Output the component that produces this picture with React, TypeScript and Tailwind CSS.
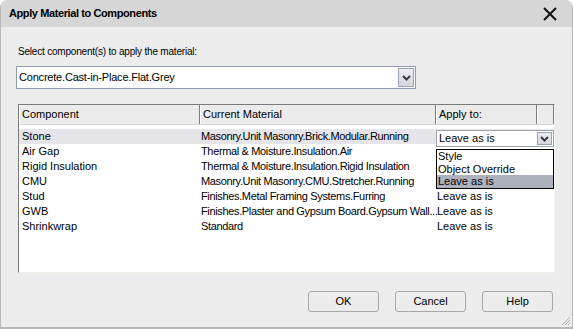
import React from 'react';

interface Row {
  component: string;
  material: string;
  applyTo: string;
}

const rows: Row[] = [
  { component: 'Stone', material: 'Masonry.Unit Masonry.Brick.Modular.Running', applyTo: 'Leave as is' },
  { component: 'Air Gap', material: 'Thermal & Moisture.Insulation.Air', applyTo: 'Leave as is' },
  { component: 'Rigid Insulation', material: 'Thermal & Moisture.Insulation.Rigid Insulation', applyTo: 'Leave as is' },
  { component: 'CMU', material: 'Masonry.Unit Masonry.CMU.Stretcher.Running', applyTo: 'Leave as is' },
  { component: 'Stud', material: 'Finishes.Metal Framing Systems.Furring', applyTo: 'Leave as is' },
  { component: 'GWB', material: 'Finishes.Plaster and Gypsum Board.Gypsum Wall...', applyTo: 'Leave as is' },
  { component: 'Shrinkwrap', material: 'Standard', applyTo: 'Leave as is' },
];

const options = ['Style', 'Object Override', 'Leave as is'];

// rows whose "Apply to" cell sits under the open list
const hiddenByList = [0, 1, 2, 3];

const Chevron = () => (
  <svg width="9" height="6" viewBox="0 0 9 6">
    <path d="M1 1 L4.5 4.5 L8 1" fill="none" stroke="#3a3a3a" strokeWidth="2" />
  </svg>
);

const ArrowButton: React.FC<{ className?: string }> = ({ className }) => (
  <div
    className={`flex items-center justify-center border border-[#9aa2b4] bg-gradient-to-b from-[#eceef4] to-[#d4d6e0] ${className ?? ''}`}
  >
    <Chevron />
  </div>
);

const HeaderCell: React.FC<{ label?: string }> = ({ label }) => (
  <div className="flex h-full items-center border-r border-r-[#7c7c7c] border-l border-l-white bg-[#ebebeb] pl-[2px] text-[11px] text-black">
    {label}
  </div>
);

const DialogButton: React.FC<{ label: string }> = ({ label }) => (
  <button
    type="button"
    className="flex h-[21px] w-[71px] items-center justify-center rounded-[3px] border border-[#a8a8a8] bg-[#ececec] text-[11px] text-black"
  >
    {label}
  </button>
);

export default function App() {
  return (
    <div
      className="flex h-[329px] w-[573px] flex-col overflow-hidden rounded-t-[8px] border-x border-b-2 border-[#b8b8b8] bg-[#ececec] text-black"
      style={{ fontFamily: '"Liberation Sans", Arial, sans-serif' }}
    >
      {/* title bar */}
      <div className="flex h-[27px] shrink-0 items-center justify-between bg-[#d6d6d6] pl-[8px] pr-[14px]">
        <span className="text-[11px] font-bold tracking-[-0.4px]">Apply Material to Components</span>
        <svg width="16" height="16" viewBox="0 0 16 16">
          <path d="M2 2 L14 14 M14 2 L2 14" stroke="#111" strokeWidth="2" />
        </svg>
      </div>

      <div className="flex flex-1 flex-col pl-[15px]">
        <div className="mt-[18px] h-[14px] pl-[2px] text-[10px] leading-[14px] tracking-[-0.2px]">
          Select component(s) to apply the material:
        </div>

        {/* material dropdown */}
        <div className="mt-[7px] flex h-[23px] w-[400px] items-center border border-[#8f9bb3] bg-white pr-[1px]">
          <span className="flex-1 pl-[2px] text-[11px] tracking-[-0.2px]">Concrete.Cast-in-Place.Flat.Grey</span>
          <ArrowButton className="h-[19px] w-[16px]" />
        </div>

        {/* component table */}
        <div className="relative ml-[2px] mt-[15px] h-[169px] w-[537px] border border-t-[#7a7a7a] border-l-[#7a7a7a] border-r-[#f4f4f0] border-b-[#f0f0e8] bg-white">
          <div className="grid h-[20px] grid-cols-[181px_236px_101px_1fr] border-b border-[#d8d8d8]">
            <HeaderCell label="Component" />
            <HeaderCell label="Current Material" />
            <HeaderCell label="Apply to:" />
            <HeaderCell />
          </div>

          <div className="mt-[4px] flex flex-col">
            {rows.map((row, i) => (
              <div
                key={row.component}
                className={`grid h-[15px] grid-cols-[181px_236px_101px_1fr] items-center text-[11px] leading-[15px] ${
                  i === 0 ? 'bg-[#e4e4e9]' : ''
                }`}
              >
                <span className="pl-[3px]">{row.component}</span>
                <span className="whitespace-nowrap pl-[1px] tracking-[-0.35px]">{row.material}</span>
                <span className="pl-[1px]">{hiddenByList.includes(i) ? '' : row.applyTo}</span>
                <span />
              </div>
            ))}
          </div>

          {/* open combo box on first row */}
          <div className="absolute left-[417px] top-[25px] w-[118px]">
            <div className="flex h-[17px] items-center border border-[#9aa2b4] bg-white pr-[1px]">
              <span className="flex-1 pl-[2px] text-[11px]">Leave as is</span>
              <ArrowButton className="h-[13px] w-[15px]" />
            </div>
            <div className="mt-[2px] flex flex-col border border-black bg-white text-[11px] leading-[12.5px]">
              {options.map((opt) => (
                <span key={opt} className={`pl-[1px] ${opt === 'Leave as is' ? 'bg-[#adb1bd]' : ''}`}>
                  {opt}
                </span>
              ))}
            </div>
          </div>
        </div>

        {/* buttons */}
        <div className="mt-[18px] flex justify-end gap-[16px] pr-[19px]">
          <DialogButton label="OK" />
          <DialogButton label="Cancel" />
          <DialogButton label="Help" />
        </div>

        <div className="mt-auto flex justify-end pb-[1px] pr-[1px]">
          <svg width="10" height="10" viewBox="0 0 10 10">
            <path d="M9 1 L1 9 M9 4 L4 9 M9 7 L7 9" stroke="#b0b0b0" strokeWidth="1" />
          </svg>
        </div>
      </div>
    </div>
  );
}
